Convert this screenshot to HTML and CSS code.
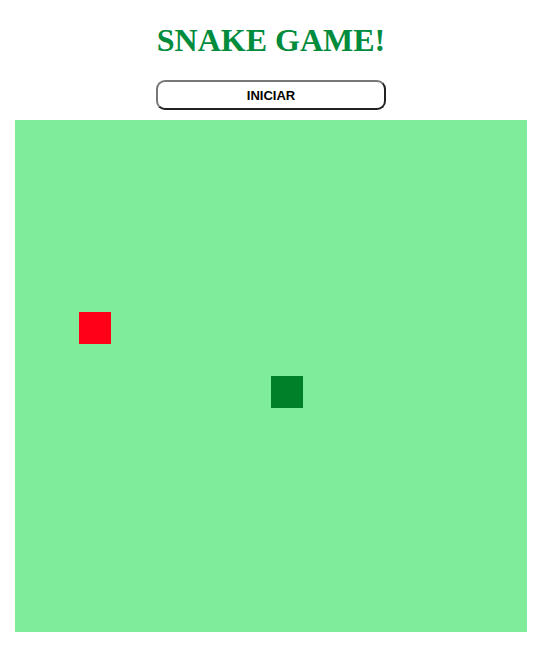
FILE: index.html
```html
<!DOCTYPE html>
<html>
<head>
<meta charset="utf-8">
<link rel="stylesheet" href="styles.css">
</head>
<body>
<main class="page">
  <h1 class="title">SNAKE GAME!</h1>
  <button class="start">INICIAR</button>
  <div class="board">
    <div class="cell food" style="left:64px;top:192px"></div>
    <div class="cell snake" style="left:256px;top:256px"></div>
  </div>
</main>
</body>
</html>
```
FILE: styles.css
```css
html, body {
  margin: 0;
  padding: 0;
  background: #fff;
  overflow: hidden;
}
.page {
  display: flex;
  flex-direction: column;
  align-items: center;
  padding-left: 2px;
}
.title {
  font-family: "Liberation Serif", "Times New Roman", serif;
  font-weight: bold;
  font-size: 32px;
  line-height: 37px;
  color: #008c3c;
  margin: 22px 0 21px;
}
.start {
  box-sizing: border-box;
  width: 230px;
  height: 30px;
  background: #fff;
  border: 2px solid;
  border-color: #787878 #222 #222 #787878;
  border-radius: 9px;
  font-family: "Liberation Sans", Arial, sans-serif;
  font-weight: bold;
  font-size: 13px;
  color: #000;
  padding: 0;
  margin: 0;
}
.board {
  position: relative;
  width: 512px;
  height: 512px;
  margin-top: 10px;
  background: #7eec98;
}
.cell {
  position: absolute;
  width: 32px;
  height: 32px;
}
.food { background: #ff0018; }
.snake { background: #008028; }
```
